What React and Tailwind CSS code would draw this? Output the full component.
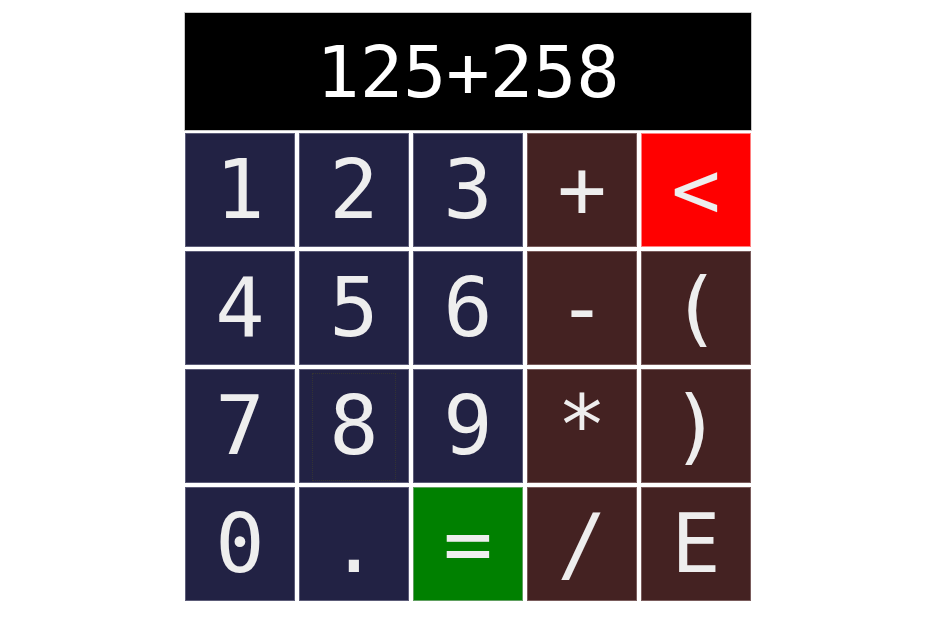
const keys = [
  ["1", "num"], ["2", "num"], ["3", "num"], ["+", "op"], ["<", "back"],
  ["4", "num"], ["5", "num"], ["6", "num"], ["-", "op"], ["(", "op"],
  ["7", "num"], ["8", "num"], ["9", "num"], ["*", "op"], [")", "op"],
  ["0", "num"], [".", "num"], ["=", "eq"], ["/", "op"], ["E", "op"],
];

const colors = {
  num: "bg-[#222244] border-[#5c5c78]",
  op: "bg-[#442222] border-[#7a5c5c]",
  back: "bg-[#ff0000] border-[#ff8080]",
  eq: "bg-[#008000] border-[#60a060]",
};

function Key({ label, kind, focused }) {
  return (
    <button
      className={`relative h-[114px] border text-[82px] leading-none text-[#eeeeee] flex items-center justify-center ${colors[kind]}`}
    >
      {focused && (
        <span className="absolute left-[12px] right-[12px] top-[3px] bottom-[1px] border border-dotted border-[#333]" />
      )}
      {label}
    </button>
  );
}

export default function App() {
  return (
    <div className="min-h-screen bg-white font-['DejaVu_Sans_Mono',monospace]">
      <div className="ml-[184px] w-[568px] pt-[12px]">
        <div className="h-[119px] bg-black border border-[#c8c8c8] flex items-center justify-center text-white text-[72px] leading-none">
          125+258
        </div>
        <div className="mt-[2px] px-[1px] grid grid-cols-5 gap-[4px]">
          {keys.map(([label, kind]) => (
            <Key key={label} label={label} kind={kind} focused={label === "8"} />
          ))}
        </div>
      </div>
    </div>
  );
}
